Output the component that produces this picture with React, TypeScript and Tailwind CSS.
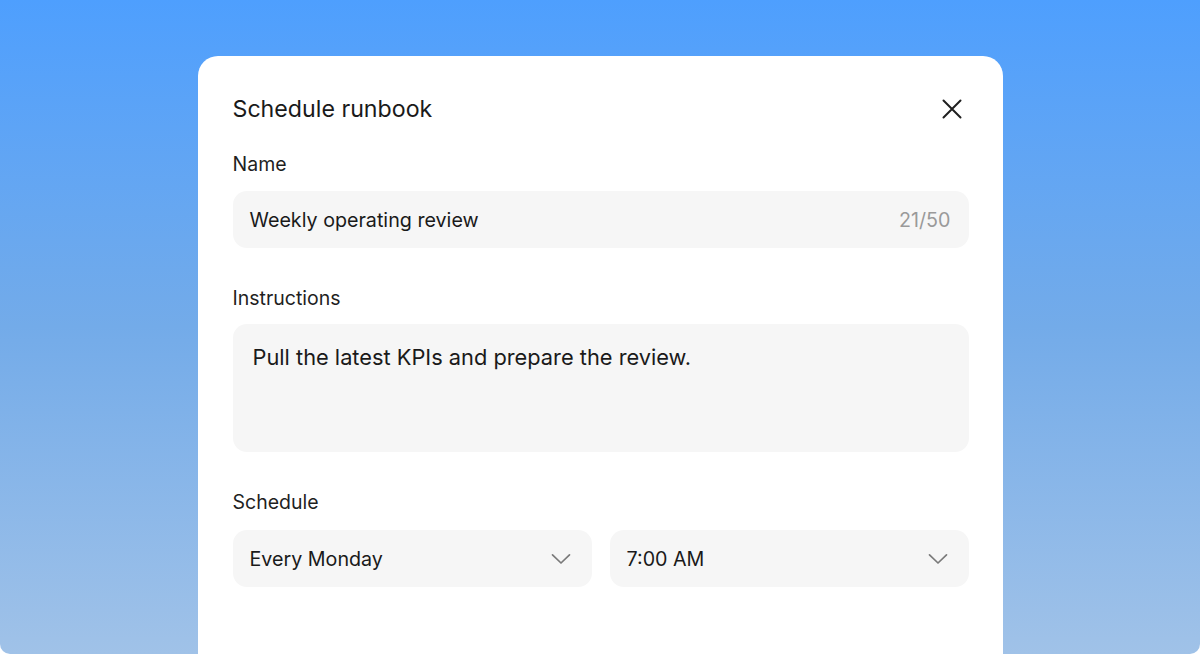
import React from "react";

function Chevron() {
  return (
    <svg width="20" height="12" viewBox="0 0 20 12" fill="none" className="shrink-0 -mt-[3px]">
      <path d="M1.5 1.8 L10 10 L18.5 1.8" stroke="#7a7a7a" strokeWidth="1.7" strokeLinecap="round" strokeLinejoin="round" />
    </svg>
  );
}

export default function App() {
  const font = { fontFamily: "Inter, 'Noto Sans', sans-serif" };
  return (
    <div
      className="h-[654px] w-full overflow-hidden bg-gradient-to-b from-[#4e9ffe] via-[#73abe9] to-[#a0c2e8] flex justify-center pt-[56px] rounded-b-[10px]"
      style={font}
    >
      <div className="w-[805px] h-[640px] bg-white rounded-[20px] pl-[35px] pr-[34px] pt-[38px] flex flex-col">
        <div className="flex items-center justify-between h-[30px]">
          <h1 className="text-[23.2px] leading-[30px] text-[#1a1a1a] font-normal">Schedule runbook</h1>
          <svg width="24" height="24" viewBox="0 0 24 24" fill="none" className="mr-[5px]">
            <path d="M3.5 3.5 L20.5 20.5 M20.5 3.5 L3.5 20.5" stroke="#1f1f1f" strokeWidth="2" strokeLinecap="round" />
          </svg>
        </div>
        <div className="mt-[27px] text-[19.5px] leading-[26px] text-[#1f1f1f]">Name</div>
        <div className="mt-[14px] h-[57px] rounded-[14px] bg-[#f6f6f6] flex items-center justify-between pl-[17px] pr-[18px] pt-[3px]">
          <span className="text-[19.7px] text-[#1a1a1a]">Weekly operating review</span>
          <span className="text-[19.7px] text-[#9a9a9a]">21/50</span>
        </div>
        <div className="mt-[37px] text-[19.5px] leading-[26px] text-[#1f1f1f]">Instructions</div>
        <div className="mt-[13px] h-[128px] rounded-[14px] bg-[#f6f6f6] pl-[20px] pt-[19px]">
          <span className="text-[21.8px] leading-[28px] text-[#1a1a1a]">Pull the latest KPIs and prepare the review.</span>
        </div>
        <div className="mt-[37px] text-[19.5px] leading-[26px] text-[#1f1f1f]">Schedule</div>
        <div className="mt-[15px] grid grid-cols-2 gap-[18px]">
          <div className="h-[57px] rounded-[14px] bg-[#f6f6f6] flex items-center justify-between pl-[17px] pr-[21px] pt-[3px]">
            <span className="text-[19.7px] text-[#1a1a1a]">Every Monday</span>
            <Chevron />
          </div>
          <div className="h-[57px] rounded-[14px] bg-[#f6f6f6] flex items-center justify-between pl-[17px] pr-[21px] pt-[3px]">
            <span className="text-[19.7px] text-[#1a1a1a]">7:00 AM</span>
            <Chevron />
          </div>
        </div>
      </div>
    </div>
  );
}
